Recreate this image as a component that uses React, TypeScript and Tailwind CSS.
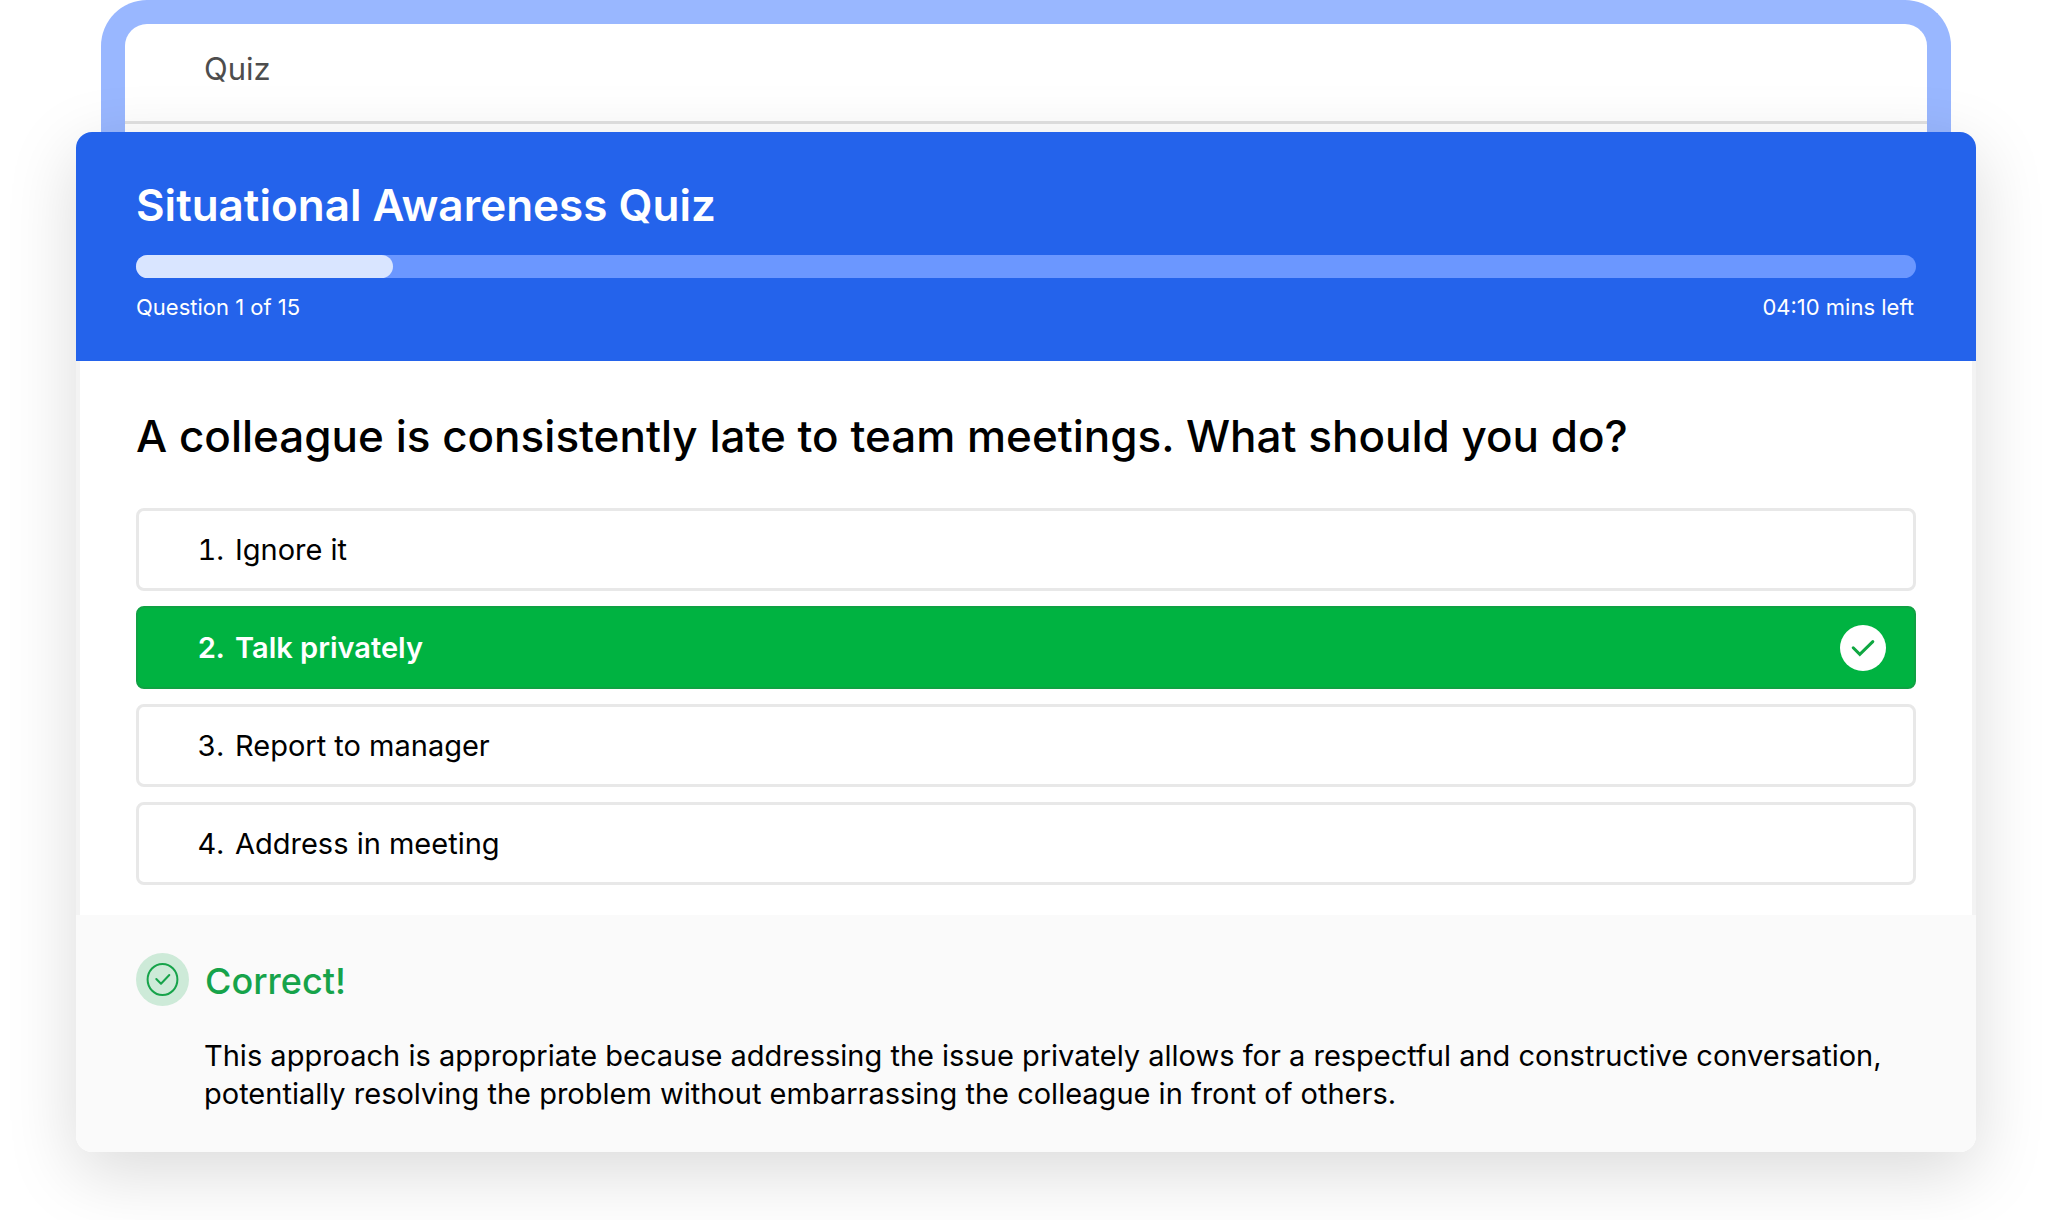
import { useState } from "react";

const options = ["Ignore it", "Talk privately", "Report to manager", "Address in meeting"];
const correctIndex = 1;

function SelectedMark() {
  return (
    <svg className="ml-auto size-[46px] shrink-0" viewBox="0 0 46 46" fill="none" aria-hidden="true">
      <circle cx="23" cy="23" r="23" fill="#fff" />
      <path d="M13.2 22.8 L19.8 29.4 L32.8 16.6" stroke="#0fa741" strokeWidth="3" strokeLinecap="round" />
    </svg>
  );
}

function CorrectMark() {
  return (
    <svg className="size-[53px] shrink-0" viewBox="0 0 53 53" fill="none" aria-hidden="true">
      <circle cx="26.5" cy="26.5" r="26.5" fill="#cdead8" />
      <ellipse cx="26.5" cy="26.5" rx="14.9" ry="15.6" stroke="#16a34a" strokeWidth="2" />
      <path d="M20.3 26 L25 30.8 L33.3 22" stroke="#16a34a" strokeWidth="2" strokeLinecap="round" strokeLinejoin="round" />
    </svg>
  );
}

export default function App() {
  const [selected, setSelected] = useState(correctIndex);

  return (
    <main className="overflow-hidden bg-white pb-[68px] font-['Inter',sans-serif] text-black">
      <div className="mx-[101px] rounded-t-[46px] border-24 border-b-0 border-[#99b7ff] bg-white">
        <div className="border-b-3 border-[#e2e2e2] px-[79px] pt-[25px] pb-8 text-[31px] leading-10 text-[#4d4d4d]">Quiz</div>
        <div className="h-2" />
      </div>

      <section className="relative mx-[76px] rounded-2xl shadow-[0_20px_70px_rgba(0,0,0,0.15)]">
        <header className="rounded-t-2xl bg-[#2463eb] px-[60px] pt-[45px] pb-10 text-white">
          <h1 className="text-[44px] leading-14 font-semibold">Situational Awareness Quiz</h1>
          <div className="mt-[22px] h-[23px] rounded-full bg-[#6b97ff]" role="progressbar" aria-label="Quiz progress" aria-valuenow={1} aria-valuemin={0} aria-valuemax={15}>
            <div className="h-full w-[257px] rounded-full bg-[#d9e5ff]" />
          </div>
          <div className="mt-[15px] flex justify-between pr-0.5 text-[22px] leading-7">
            <span>Question 1 of 15</span>
            <span>04:10 mins left</span>
          </div>
        </header>

        <div className="border-x-4 border-[#f3f3f3] bg-white px-14 pt-[47px] pb-[30px]">
          <h2 className="text-[44px] leading-14 font-medium">
            A colleague is consistently late to team meetings. What should you do?
          </h2>
          <div className="mt-11 flex flex-col gap-[15px]">
            {options.map((label, i) => (
              <button
                key={label}
                type="button"
                aria-pressed={selected === i}
                onClick={() => setSelected(i)}
                className={
                  selected === i
                    ? "flex h-[83px] items-center rounded-lg border-2 border-[#0fa243] bg-[#00b341] pr-7 pl-px text-left text-[29px] font-semibold text-white"
                    : "flex h-[83px] items-center rounded-lg border-3 border-[#e8e8e8] bg-white pr-7 text-left text-[29px]"
                }
              >
                <span className="w-[85px] text-right tabular-nums">{i + 1}.</span>
                <span className="ml-[11px]">{label}</span>
                {selected === i && <SelectedMark />}
              </button>
            ))}
          </div>
        </div>

        <footer className="rounded-b-2xl bg-[#fafafa] px-[60px] pt-[38px] pb-[39px]">
          <div className="flex items-center gap-4">
            <CorrectMark />
            <h3 className="pt-0.5 text-4xl leading-12 font-medium text-[#16a34a]">Correct!</h3>
          </div>
          <p className="mt-[31px] pl-[68px] text-[29px] leading-[38px]">
            This approach is appropriate because addressing the issue privately allows for a respectful and constructive conversation, potentially resolving the problem without embarrassing the colleague in front of others.
          </p>
        </footer>
      </section>
    </main>
  );
}
